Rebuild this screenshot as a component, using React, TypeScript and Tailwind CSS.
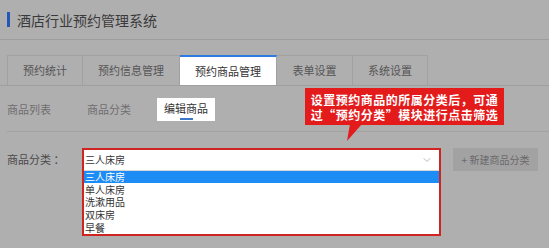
import { ChevronDown } from 'lucide-react';

const FONT = { fontFamily: '"Noto Sans CJK SC", "Noto Sans", sans-serif' };

const TABS = [
  { label: '预约统计', w: 'w-[76px]' },
  { label: '预约信息管理', w: 'w-[97px]' },
  { label: '预约商品管理', w: 'w-[97px]', active: true },
  { label: '表单设置', w: 'w-[76px]' },
  { label: '系统设置', w: 'w-[75px]' },
];

const OPTIONS = ['三人床房', '单人床房', '洗漱用品', '双床房', '早餐'];

export default function App() {
  return (
    <div className="relative w-[549px] h-[248px] overflow-hidden bg-[#b0afb0] text-[#444]" style={FONT}>
      {/* header */}
      <div className="h-[40px] flex items-center pl-[7px] border-b border-[#9e9d9e]">
        <div className="w-[3px] h-[15px] bg-[#2457b8]" />
        <div className="ml-[7px] text-[14px] text-[#3a3a3a] leading-none">酒店行业预约管理系统</div>
      </div>

      {/* main tabs */}
      <div className="mt-[15px] px-[7px] flex h-[31px] border-b border-[#a09fa0]">
        {TABS.map(t => (
          <div key={t.label}
            className={`${t.w} flex items-center justify-center text-[11px] border-r border-[#a2a1a2] ${t.active ? 'bg-white border-t-2 border-t-[#2d7be0] text-[#333]' : 'border-t border-t-[#a2a1a2] text-[#555]'} ${t.label === '预约统计' ? 'border-l border-l-[#a2a1a2]' : ''}`}>
            {t.label}
          </div>
        ))}
      </div>

      {/* sub tabs */}
      <div className="mt-[12px] mx-[7px] flex items-center h-[23px] text-[11px] text-[#6f6e6f]">
        <div className="w-[80px]">商品列表</div>
        <div className="w-[70px]">商品分类</div>
        <div className="w-[58px] h-[23px] bg-white flex flex-col items-center justify-center text-[#333] leading-[13px]">
          <span className="mt-[2px]">编辑商品</span>
          <span className="mt-[3px] w-[13px] h-[2px] bg-[#3c77c8]" />
        </div>
      </div>
      <div className="mt-[10px] ml-[7px] border-t border-[#a3a2a3]" />

      {/* form */}
      <div className="mt-[16px] flex items-start pl-[7px]">
        <div className="w-[75px] h-[22px] flex items-center text-[11px] text-[#4a4a4a]">商品分类 ：</div>
        <div className="w-[359px] h-[88px] border-2 border-[#cf2420] bg-white flex flex-col">
          <div className="h-[21px] flex items-center justify-between pl-[1px] pr-[6px] text-[10px] leading-[13px] text-[#333] border-b border-[#d8d8d8]">
            <span>三人床房</span>
            <ChevronDown size={12} strokeWidth={1.2} className="text-[#888]" />
          </div>
          {OPTIONS.map((o, i) => (
            <div key={o} className={`h-[13px] flex items-center pl-[1px] text-[10px] leading-[12px] ${i === 0 ? 'bg-[#1e8cf5] text-white' : 'text-[#333]'}`}>{o}</div>
          ))}
        </div>
        <div className="ml-[12px] w-[85px] h-[23px] bg-[#a3a2a3] flex items-center justify-center text-[10px] text-[#6a696a]">+ 新建商品分类</div>
      </div>

      {/* callout */}
      <div className="absolute left-[305px] top-[88px] w-[199px] h-[37px] bg-[#e31b1b] flex flex-col items-center justify-center text-white text-[12px] font-bold leading-[15px] tracking-[0.5px]">
        <div>设置预约商品的所属分类后，可通</div>
        <div>过“预约分类”模块进行点击筛选</div>
      </div>
      <svg className="absolute left-[345px] top-[124px]" width="20" height="18" viewBox="0 0 20 18">
        <polygon points="5,0 17,0 2,17" fill="#e31b1b" />
      </svg>
    </div>
  );
}
